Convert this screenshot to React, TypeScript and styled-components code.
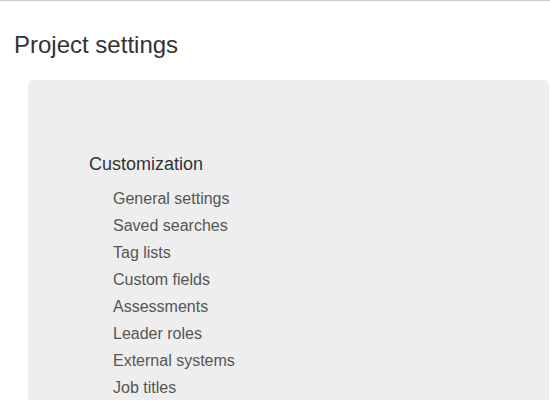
import React from "react";
import styled, { createGlobalStyle } from "styled-components";

const GlobalStyle = createGlobalStyle`
  html, body { margin: 0; padding: 0; background: #fff; }
  body { font-family: "Liberation Sans", Arial, Helvetica, sans-serif; color: #333; }
  * { box-sizing: border-box; }
`;

const Page = styled.div`
  border-top: 1px solid #ccc;
  height: 400px;
  overflow: hidden;
`;

const Title = styled.h1`
  margin: 30.5px 0 0 14px;
  font-size: 24px;
  font-weight: 400;
  line-height: 1.1;
  color: #333;
`;

const Panel = styled.div`
  margin: 22px 1px 0 28px;
  padding: 74px 20px 20px 61px;
  background: #eee;
  border-radius: 5px;
`;

const SectionTitle = styled.h3`
  margin: 0 0 10px 0;
  font-size: 18px;
  font-weight: 400;
  line-height: 21.6px;
  color: #333;
`;

const List = styled.ul`
  list-style: none;
  margin: 0;
  padding: 0 0 0 24px;
`;

const Item = styled.li`
  font-size: 16px;
  line-height: 27px;
`;

const Link = styled.a`
  color: #555;
  text-decoration: none;
`;

const items = [
  "General settings",
  "Saved searches",
  "Tag lists",
  "Custom fields",
  "Assessments",
  "Leader roles",
  "External systems",
  "Job titles",
];

export default function App() {
  return (
    <>
      <GlobalStyle />
      <Page>
        <Title>Project settings</Title>
        <Panel>
          <SectionTitle>Customization</SectionTitle>
          <List>
            {items.map((t) => (
              <Item key={t}>
                <Link href="#">{t}</Link>
              </Item>
            ))}
          </List>
        </Panel>
      </Page>
    </>
  );
}
